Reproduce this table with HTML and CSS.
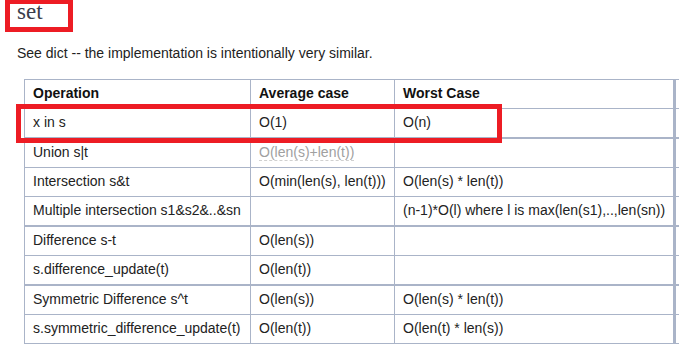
FILE: index.html
```html
<!DOCTYPE html>
<html>
<head>
<meta charset="utf-8">
<link rel="stylesheet" href="styles.css">
</head>
<body>
<div class="page">
  <h2 class="title">set</h2>
  <p class="intro">See dict -- the implementation is intentionally very similar.</p>
  <table class="ops">
    <thead>
      <tr>
        <th class="c1">Operation</th>
        <th class="c2">Average case</th>
        <th class="c3">Worst Case</th>
        <th class="c4"></th>
      </tr>
    </thead>
    <tbody>
      <tr class="sep"><td>x in s</td><td>O(1)</td><td>O(n)</td><td></td></tr>
      <tr><td>Union s|t</td><td><span class="faded">O(len(s)+len(t))</span></td><td></td><td></td></tr>
      <tr><td>Intersection s&amp;t</td><td>O(min(len(s), len(t)))</td><td>O(len(s) * len(t))</td><td></td></tr>
      <tr class="sep"><td>Multiple intersection s1&amp;s2&amp;..&amp;sn</td><td></td><td>(n-1)*O(l) where l is max(len(s1),..,len(sn))</td><td></td></tr>
      <tr><td>Difference s-t</td><td>O(len(s))</td><td></td><td></td></tr>
      <tr class="sep"><td>s.difference_update(t)</td><td>O(len(t))</td><td></td><td></td></tr>
      <tr><td>Symmetric Difference s^t</td><td>O(len(s))</td><td>O(len(s) * len(t))</td><td></td></tr>
      <tr><td>s.symmetric_difference_update(t)</td><td>O(len(t))</td><td>O(len(t) * len(s))</td><td></td></tr>
    </tbody>
  </table>
  <div class="mark mark-title"></div>
  <div class="mark mark-row"></div>
</div>
</body>
</html>
```
FILE: styles.css
```css
html, body {
  margin: 0;
  padding: 0;
  background: #ffffff;
}
.page {
  position: relative;
  width: 679px;
  height: 355px;
  overflow: hidden;
  font-family: "Liberation Sans", Arial, sans-serif;
  color: #222222;
}
.title {
  margin: 0;
  padding: 0 0 0 17px;
  font-family: "Liberation Serif", "Times New Roman", serif;
  font-weight: normal;
  font-size: 23px;
  line-height: 24px;
  color: #3a3d4a;
}
.intro {
  margin: 21px 0 0 0;
  padding-left: 17px;
  font-size: 14px;
  line-height: 16px;
}
.ops {
  margin: 18px 0 0 24px;
  border-collapse: separate;
  border-spacing: 0;
  table-layout: fixed;
  width: 772px;
  border-top: 1px solid #aab4c8;
  border-left: 1px solid #aab4c8;
  font-size: 14px;
}
.ops th, .ops td {
  box-sizing: border-box;
  padding: 3px 8px 5px 8px;
  line-height: 20px;
  height: 29px;
  text-align: left;
  vertical-align: middle;
  white-space: nowrap;
  border-right: 1px solid #aab4c8;
  border-bottom: 1px solid #aab4c8;
}
.ops th {
  font-weight: bold;
  color: #111111;
}
.ops .c1 { width: 226px; }
.ops .c2 { width: 144px; }
.ops .c3 { width: 281px; }
.ops .c4 { width: 120px; }
.ops th:nth-child(3), .ops td:nth-child(3) {
  border-right: 3px solid #aab4c8;
}
.ops tr.sep td {
  border-bottom: 2px solid #aab4c8;
  height: 30px;
}
.faded {
  color: #a0a0a0;
  border-bottom: 1px dashed #d0d0d0;
}
.mark {
  position: absolute;
  box-sizing: border-box;
  border: 5px solid #ed1c24;
}
.mark-title {
  left: 5px;
  top: -1px;
  width: 68px;
  height: 33px;
}
.mark-row {
  left: 16px;
  top: 104px;
  width: 486px;
  height: 39px;
}
```
